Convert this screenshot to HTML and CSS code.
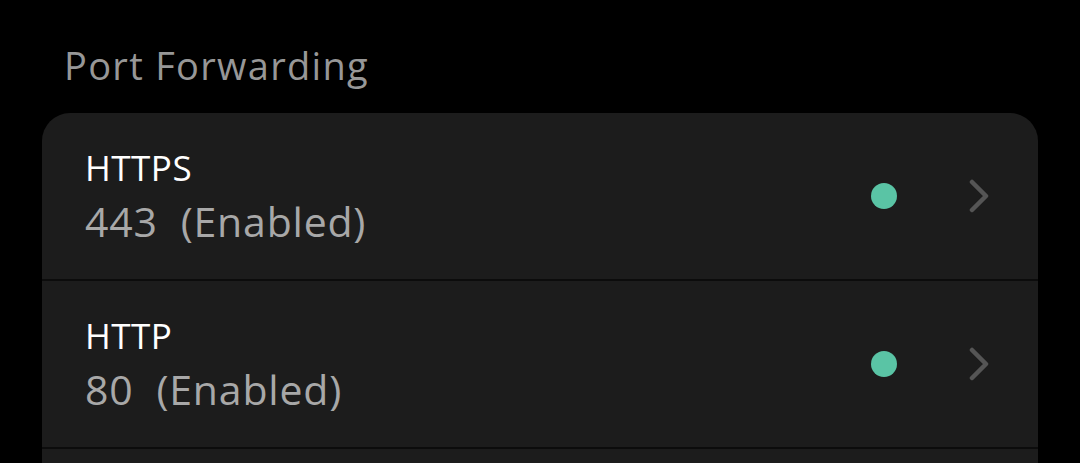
FILE: index.html
```html
<!DOCTYPE html>
<html>
<head>
<meta charset="utf-8">
<link rel="stylesheet" href="styles.css">
</head>
<body>
<div class="page">
  <h2 class="section-title">Port Forwarding</h2>
  <div class="card">
    <div class="row">
      <div class="texts">
        <div class="title">HTTPS</div>
        <div class="sub">443&nbsp; (Enabled)</div>
      </div>
      <span class="dot"></span>
      <svg class="chev" width="20" height="34" viewBox="0 0 20 34"><path d="M3 3 L17 17 L3 31" fill="none" stroke="#555555" stroke-width="4.5" stroke-linecap="round" stroke-linejoin="round"/></svg>
    </div>
    <div class="row">
      <div class="texts">
        <div class="title">HTTP</div>
        <div class="sub">80&nbsp; (Enabled)</div>
      </div>
      <span class="dot"></span>
      <svg class="chev" width="20" height="34" viewBox="0 0 20 34"><path d="M3 3 L17 17 L3 31" fill="none" stroke="#555555" stroke-width="4.5" stroke-linecap="round" stroke-linejoin="round"/></svg>
    </div>
    <div class="row"></div>
  </div>
</div>
</body>
</html>
```
FILE: styles.css
```css
html, body {
  margin: 0;
  padding: 0;
  background: #000;
  height: 463px;
  overflow: hidden;
}
.page {
  font-family: "Open Sans", "Liberation Sans", sans-serif;
  padding-top: 40px;
}
.section-title {
  margin: 0 0 0 64px;
  font-size: 38px;
  font-weight: 400;
  color: #979797;
  line-height: 50px;
  height: 73px;
  letter-spacing: 1.3px;
}
.card {
  margin: 0 42px;
  background: #1c1c1c;
  border-radius: 28px 28px 0 0;
  display: flex;
  flex-direction: column;
}
.row {
  height: 166px;
  display: flex;
  align-items: center;
  padding: 0 49px 0 43px;
  border-bottom: 2px solid #0c0c0c;
  box-sizing: content-box;
}
.texts {
  flex: 1;
  display: flex;
  flex-direction: column;
  gap: 10px;
}
.title {
  font-size: 35px;
  color: #ffffff;
  line-height: 40px;
  letter-spacing: 0.5px;
}
.sub {
  font-size: 41px;
  color: #a8a8a8;
  line-height: 46px;
  letter-spacing: 0.8px;
}
.dot {
  width: 26px;
  height: 26px;
  border-radius: 50%;
  background: #5ac4a5;
  margin-right: 72px;
}
.chev {
  display: block;
}
```
